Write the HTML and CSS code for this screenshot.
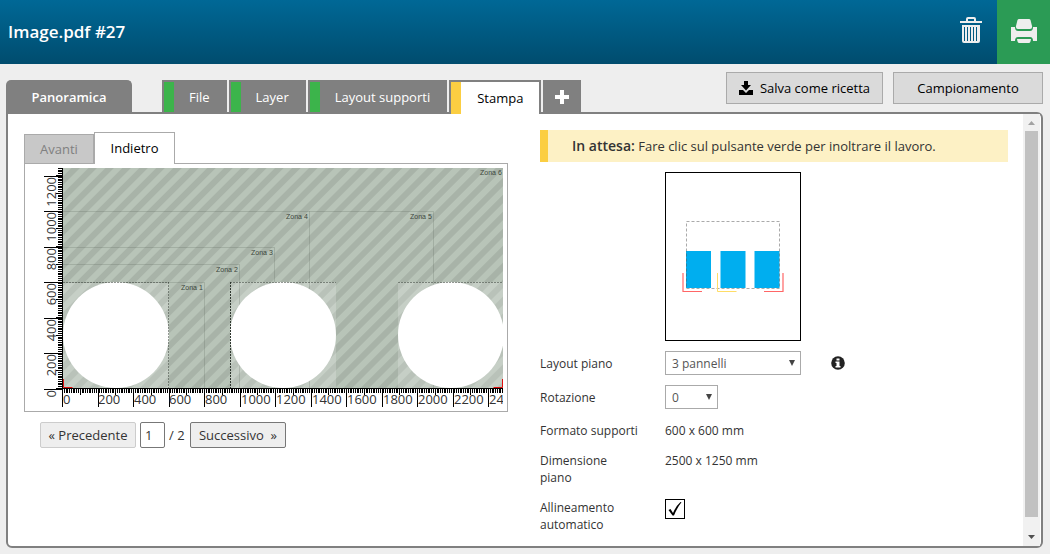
FILE: index.html
```html
<!DOCTYPE html>
<html lang="it">
<head>
<meta charset="utf-8">
<title>Image.pdf #27</title>
<link rel="stylesheet" href="styles.css">
</head>
<body>
<div class="app">
  <header class="topbar">
    <h1 class="topbar-title">Image.pdf #27</h1>
    <button class="icon-button" type="button" aria-label="Elimina">
      <svg width="24" height="28" viewBox="0 0 24 28" fill="#eee">
        <path fill-rule="evenodd" d="M1 5h6V3q0-2 2-2h6q2 0 2 2v2h6v2H1zM9 3v2h6V3z"/>
        <path fill-rule="evenodd" d="M3 9h18v16q0 2-2 2H5q-2 0-2-2zM5 11v14h1V11zM8 11v14h1V11zM11 11v14h1V11zM14 11v14h1V11zM17 11v14h1V11z"/>
      </svg>
    </button>
    <button class="icon-button print-button" type="button" aria-label="Stampa lavoro">
      <svg width="26" height="26" viewBox="0 0 26 26" fill="#eee">
        <path d="M8 1h10q1 0 1.500 1L21 8q.5 3-2 3H7q-2.500 0-2-3l1.500-6Q7 1 8 1z"/>
        <path d="M0 9h4q0 4 3 4h12q3 0 3-4h4v14h-4q0-4-3-4H7q-3 0-3 4H0z"/>
        <path d="M6 21h14q-.5 4-2 4H8q-1.500 0-2-4z"/>
      </svg>
    </button>
  </header>

  <div class="toolbar">
    <nav class="tabs">
      <button class="tab tab-overview" type="button">Panoramica</button>
      <button class="tab tab-done" type="button">File</button>
      <button class="tab tab-done" type="button">Layer</button>
      <button class="tab tab-done" type="button">Layout supporti</button>
      <button class="tab tab-active" type="button">Stampa</button>
      <button class="tab tab-add" type="button" aria-label="Aggiungi">
        <svg width="14" height="14" viewBox="0 0 14 14" fill="#fff"><path d="M5 0h4v5h5v4H9v5H5V9H0V5h5z"/></svg>
      </button>
    </nav>
    <div class="actions">
      <button class="action" type="button">
        <svg width="14" height="14" viewBox="0 0 14 14"><path d="M5 0h4v4h3L7 9.500 2 4h3zM0 9h4l3 3 3-3h4v5H0z"/></svg>
        Salva come ricetta
      </button>
      <button class="action action-wide" type="button">Campionamento</button>
    </div>
  </div>

  <main class="panel">
    <div class="content">
      <section class="viewer">
        <div class="sides">
          <button class="side" type="button">Avanti</button>
          <button class="side side-active" type="button">Indietro</button>
        </div>
        <div class="stage">
          <svg class="stage-art" viewBox="25 164 482 247">
            <defs>
              <pattern id="stripes" width="12" height="12" patternUnits="userSpaceOnUse" patternTransform="translate(63 168) rotate(45)">
                <rect width="12" height="12" fill="#a8b3a8"/>
                <rect width="6" height="12" fill="#b8c4b8"/>
              </pattern>
              <clipPath id="bed"><rect x="63" y="168" width="440" height="220"/></clipPath>
              <clipPath id="frame"><rect x="25" y="168" width="478" height="243"/></clipPath>
            </defs>
            <g clip-path="url(#bed)">
              <rect x="63" y="168" width="440" height="220" fill="url(#stripes)"/>
              <path d="M63 282h106v106H63zM230 282h106v106H230zM398 282h106v106H398z" class="panel-tint"/>
              <path class="zone-line" d="M63 282.500h141.500V388M63 264.500h176.500V388M63 247.500h211.500V388M63 211.500h246.500V388M309 211.500h124.500V388"/>
              <circle cx="116" cy="335" r="53" fill="#fff"/>
              <circle cx="283" cy="335" r="53" fill="#fff"/>
              <circle cx="451" cy="335" r="53" fill="#fff"/>
              <path class="sheet-edge" d="M63 282.500h106M230 282.500h106M398 282.500h106M168.500 282v106"/>
              <path class="sheet-edge sheet-edge-dark" d="M230.500 282v106"/>
              <path d="M63.500 379v8.500h9M502.500 379v8.500h-9" fill="none" stroke="#e01010"/>
              <g class="zone-name">
                <text x="181" y="290">Zona 1</text>
                <text x="216" y="272">Zona 2</text>
                <text x="251" y="255">Zona 3</text>
                <text x="286" y="219">Zona 4</text>
                <text x="410" y="219">Zona 5</text>
                <text x="480" y="175">Zona 6</text>
              </g>
            </g>
            <g clip-path="url(#frame)" class="ruler">
              <path d="M62.500 168v221M62 388.500h441"/>
              <path class="tick-small" d="M62 391h441M60 389V168"/>
              <path class="tick-mid" d="M62 392h441M59 389V168"/>
              <path class="tick-big" d="M62 398h441M53 389.500V168"/>
              <g class="ruler-text">
                <text x="63" y="404">0</text>
                <text x="98" y="404">200</text>
                <text x="134" y="404">400</text>
                <text x="169" y="404">600</text>
                <text x="205" y="404">800</text>
                <text x="241" y="404">1000</text>
                <text x="276" y="404">1200</text>
                <text x="312" y="404">1400</text>
                <text x="347" y="404">1600</text>
                <text x="383" y="404">1800</text>
                <text x="418" y="404">2000</text>
                <text x="454" y="404">2200</text>
                <text x="489" y="404">2400</text>
              </g>
              <g class="ruler-text ruler-text-side">
                <text transform="translate(56 390) rotate(-90)">0</text>
                <text transform="translate(56 354) rotate(-90)">200</text>
                <text transform="translate(56 319) rotate(-90)">400</text>
                <text transform="translate(56 283) rotate(-90)">600</text>
                <text transform="translate(56 248) rotate(-90)">800</text>
                <text transform="translate(56 212) rotate(-90)">1000</text>
                <text transform="translate(56 177) rotate(-90)">1200</text>
              </g>
            </g>
          </svg>
        </div>
        <div class="pager">
          <button class="page-button" type="button" disabled>« Precedente</button>
          <input class="page-input" type="text" value="1" aria-label="Pagina">
          <span class="page-total">/ 2</span>
          <button class="page-button" type="button">Successivo&nbsp; »</button>
        </div>
      </section>

      <section class="settings">
        <p class="notice"><strong class="notice-title">In attesa:</strong> Fare clic sul pulsante verde per inoltrare il lavoro.</p>
        <svg class="preview" width="136" height="169" viewBox="0 0 136 169">
          <rect x=".5" y=".5" width="135" height="168" fill="#fff" stroke="#000"/>
          <path d="M21 79h25v37H21zM55.500 79h25v37h-25zM89.500 79h25v37h-25z" fill="#00aeef"/>
          <rect x="21.500" y="49.500" width="93" height="67" fill="none" stroke="#555" stroke-opacity=".5" stroke-dasharray="3 2"/>
          <path d="M18 101v18.500h19M118 101v18.500H99" fill="none" stroke="#f66" stroke-width="1.200"/>
          <path d="M52.500 101v18.500h19" fill="none" stroke="#fd6"/>
        </svg>
        <div class="row">
          <label class="row-label" for="layout">Layout piano</label>
          <span class="select-box select-wide"><select id="layout" class="select"><option>3 pannelli</option></select></span>
          <svg class="info" width="14" height="14" viewBox="0 0 14 14"><circle cx="7" cy="7" r="6.800" fill="#222"/><path d="M5.500 2.500h3v2h-3zM4.500 5.500h4V10h1v1.500h-5V10h1V7h-1z" fill="#fff"/></svg>
        </div>
        <div class="row">
          <label class="row-label" for="rotation">Rotazione</label>
          <span class="select-box"><select id="rotation" class="select"><option>0</option></select></span>
        </div>
        <div class="row row-text">
          <span class="row-label">Formato supporti</span>
          <span>600 x 600 mm</span>
        </div>
        <div class="row row-text">
          <span class="row-label">Dimensione piano</span>
          <span>2500 x 1250 mm</span>
        </div>
        <div class="row row-text">
          <label class="row-label" for="align">Allineamento automatico</label>
          <span class="check">
            <input id="align" class="check-input" type="checkbox" checked>
            <svg class="check-mark" viewBox="0 0 20 20"><path d="M3.500 11l2-1 2.500 4Q11 7 15.500 3l1 .3Q12 9 9 16.500H7.500z"/></svg>
          </span>
        </div>
      </section>
    </div>
    <div class="scrollbar" aria-hidden="true">
      <svg width="17" height="17" viewBox="0 0 17 17"><path d="M5 11h7L8.500 7z" fill="#a3a3a3"/></svg>
      <div class="scroll-thumb"></div>
      <svg width="17" height="17" viewBox="0 0 17 17"><path d="M5 6h7L8.500 10z" fill="#505050"/></svg>
    </div>
  </main>
</div>
</body>
</html>
```

FILE: styles.css
```css
* { box-sizing: border-box; }

body {
  margin: 0;
  background: #eee;
  color: #333;
  font: 12px/17px "Open Sans", "Noto Sans", sans-serif;
}

button, input, select { font: inherit; color: inherit; margin: 0; }
button { cursor: pointer; }
svg { display: block; }

.app {
  display: flex;
  flex-direction: column;
  min-height: 100vh;
  padding-bottom: 6px;
}

.topbar {
  display: flex;
  height: 64px;
  align-items: stretch;
  background: linear-gradient(#006896, #004c6e);
}
.topbar-title {
  flex: 1;
  align-self: center;
  margin: 0;
  padding-left: 8px;
  color: #fff;
  font-size: 17px;
  font-weight: 600;
  line-height: 24px;
}
.icon-button {
  display: flex;
  width: 53px;
  padding: 0 0 4px;
  border: 0;
  align-items: center;
  justify-content: center;
  background: none;
}
.print-button { padding-bottom: 2px; background: #2b9b55; }

.toolbar {
  display: flex;
  justify-content: space-between;
  padding: 8px 7px 0 6px;
}
.tabs { display: flex; gap: 2px; padding-top: 8px; }
.tab {
  height: 32px;
  border: 2px solid #808080;
  border-bottom: 0;
  padding: 0 15px;
  background: #808080;
  color: #fff;
  font-size: 13px;
}
.tab-overview {
  width: 126px;
  margin-right: 28px;
  border-radius: 5px 5px 0 0;
  font-weight: 600;
}
.tab-done { box-shadow: inset 10px 0 #3cb44b; padding-left: 25px; }
.tab-active {
  position: relative;
  height: 34px;
  margin-bottom: -2px;
  padding-right: 16px;
  padding-left: 26px;
  background: #fff;
  color: #000;
  box-shadow: inset 10px 0 #fbce42;
}
.tab-add { width: 38px; padding: 0 10px; }

.actions { display: flex; gap: 10px; }
.action {
  display: flex;
  height: 32px;
  padding: 0 12px;
  gap: 7px;
  align-items: center;
  justify-content: center;
  border: 1px solid #aaa;
  background: #dadada;
  color: #000;
  font-size: 13px;
}
.action-wide { width: 150px; }

.panel {
  display: flex;
  flex: 1;
  margin: 0 7px 0 6px;
  padding-right: 1px;
  border: 2px solid #808080;
  border-radius: 0 6px 6px 6px;
  background: #fff;
}
.content {
  display: grid;
  flex: 1;
  grid-template-columns: 484fr 468fr;
  gap: 32px;
  align-items: start;
  padding: 16px 15px 12px 16px;
}

.sides { display: flex; align-items: flex-end; padding-top: 2px; }
.side {
  height: 30px;
  width: 70px;
  padding: 0;
  border: 1px solid #aaa;
  background: #c8c8c8;
  color: #808080;
  font-size: 13px;
}
.side-active {
  position: relative;
  width: 81px;
  height: 32px;
  border-bottom: 0;
  background: #fff;
  color: #000;
}
.stage { margin-top: -1px; border: 1px solid #aaa; }
.stage-art { width: 100%; }
.panel-tint { fill: #fff; fill-opacity: .2; }
.zone-line { fill: none; stroke: #405040; stroke-opacity: .18; }
.sheet-edge { stroke: #303830; stroke-opacity: .5; stroke-dasharray: 2 1; }
.sheet-edge-dark { stroke-opacity: 1; stroke-dasharray: 2 1; }
.zone-name { font: 7px "Liberation Sans", sans-serif; fill: #3c463c; }
.ruler { stroke: #000; stroke-width: 1; fill: none; }
.tick-small { stroke-width: 4; stroke-dasharray: 1 .775; shape-rendering: crispEdges; }
.tick-mid { stroke-width: 6; stroke-dasharray: 1 16.75; shape-rendering: crispEdges; }
.tick-big { stroke-width: 18; stroke-dasharray: 1 34.5; shape-rendering: crispEdges; }
.ruler-text { font-size: 13px; fill: #333; stroke: none; }
.ruler-text-side { text-anchor: end; }

.pager { display: flex; gap: 4px; align-items: center; padding: 10px 16px 0; font-size: 13px; }
.page-button {
  height: 26px;
  width: 96px;
  padding: 0;
  border: 1px solid #777;
  border-radius: 2px;
  background: #eee;
  white-space: nowrap;
}
.page-button:disabled { border-color: #ccc; color: #333; }
.page-input { width: 25px; height: 26px; padding: 0 4px; border: 1px solid #777; border-radius: 2px; background: #fff; }
.page-total { width: 17px; }

.settings { display: flex; flex-direction: column; gap: 10px; }
.notice {
  margin: 0;
  padding: 0 24px;
  border-left: 8px solid #fbce42;
  background: #fdf1c5;
  font-size: 13px;
  line-height: 32px;
}
.notice-title { font-size: 14px; font-weight: 600; line-height: 17px; }
.preview { margin-left: 125px; }
.row { display: grid; grid-template-columns: 100px auto 1fr; column-gap: 25px; align-items: center; }
.row-text { align-items: start; padding-top: 3px; }
.info { margin-left: 5px; }
.select-box { position: relative; width: 53px; }
.select-wide { width: 136px; }
.select {
  display: block;
  width: 100%;
  height: 24px;
  padding: 0 6px;
  border: 1px solid #aaa;
  border-radius: 0;
  background: #fff;
  color: #555;
  appearance: none;
}
.select-box::after {
  content: "";
  position: absolute;
  top: 9px;
  right: 6px;
  border: 3px solid transparent;
  border-top: 6px solid #444;
  border-bottom: 0;
  pointer-events: none;
}
.check { position: relative; width: 20px; height: 20px; }
.check-input {
  display: block;
  width: 20px;
  height: 20px;
  margin: 0;
  border: 1px solid #000;
  background: #fff;
  appearance: none;
}
.check-mark { position: absolute; inset: 0; display: none; pointer-events: none; }
.check-input:checked + .check-mark { display: block; }

.scrollbar { display: flex; flex-direction: column; width: 17px; background: #f1f1f1; }
.scroll-thumb { flex: 1; margin: 0 2px 12px; background: #c1c1c1; }
```
